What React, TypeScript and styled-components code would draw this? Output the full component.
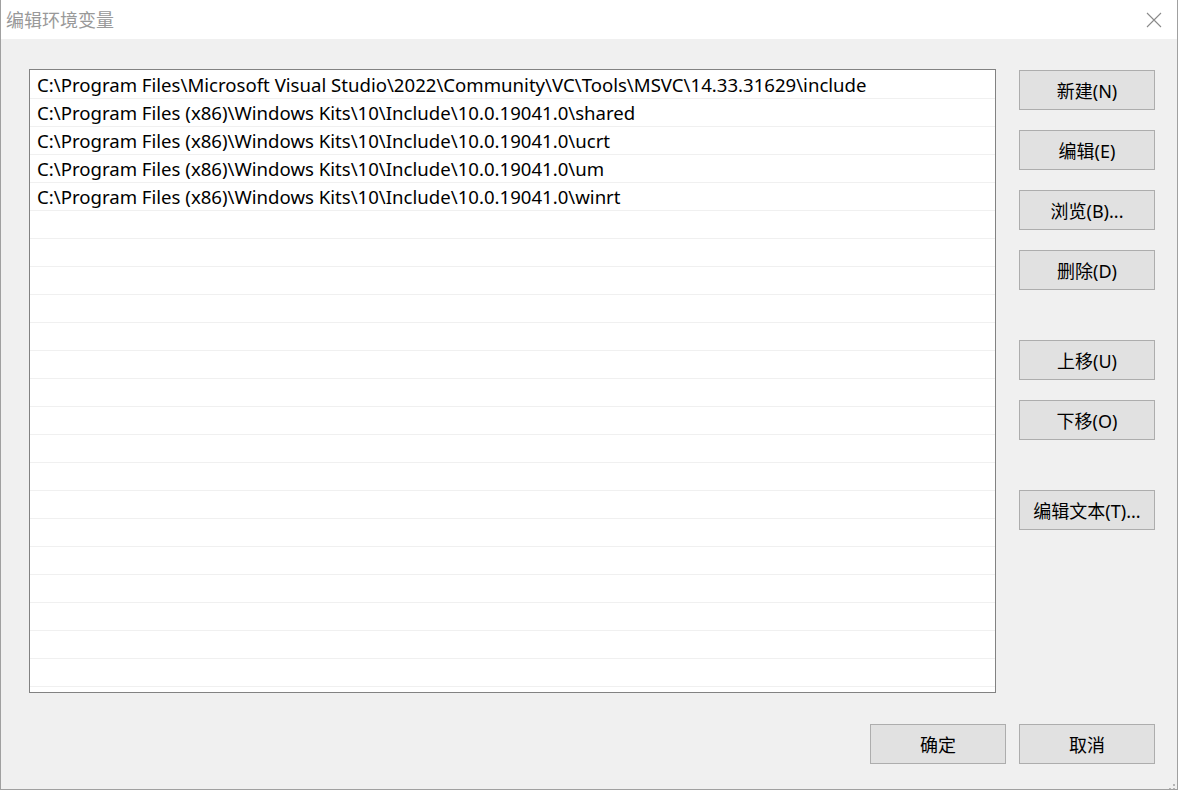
import styled, { createGlobalStyle } from "styled-components";

const GlobalStyle = createGlobalStyle`
  html, body {
    margin: 0;
    padding: 0;
    background: #ffffff;
  }
  body {
    font-family: "Noto Sans", "Noto Sans CJK SC", sans-serif;
  }
`;

const Window = styled.div`
  width: 1178px;
  height: 790px;
  box-sizing: border-box;
  border: 1px solid #a0a0a0;
  border-top: none;
  display: flex;
  flex-direction: column;
  background: #f0f0f0;
  overflow: hidden;
  position: relative;
`;

const TitleBar = styled.div`
  height: 39px;
  flex-shrink: 0;
  background: #ffffff;
  display: flex;
  align-items: center;
  justify-content: space-between;
  padding: 0 14px 0 5px;
`;

const Title = styled.span`
  font-family: "Noto Sans CJK SC", sans-serif;
  font-size: 18px;
  color: #999999;
  margin-top: -1px;
`;

const CloseButton = styled.div`
  width: 18px;
  height: 18px;
  display: flex;
  align-items: center;
  justify-content: center;
`;

const Body = styled.div`
  flex: 1;
  display: flex;
  flex-direction: column;
  padding: 30px 22px 26px 28px;
`;

const Main = styled.div`
  display: flex;
  gap: 23px;
`;

const List = styled.div`
  width: 967px;
  height: 624px;
  box-sizing: border-box;
  border: 1px solid #828282;
  padding-top: 1px;
  background: #ffffff;
  overflow: hidden;
  display: flex;
  flex-direction: column;
`;

const Row = styled.div`
  height: 28px;
  flex-shrink: 0;
  box-sizing: border-box;
  border-bottom: 1px solid #f0f0f0;
  padding-left: 7px;
  display: flex;
  align-items: center;
  font-size: 18.6px;
  color: #000000;
  white-space: nowrap;
`;

const SideButtons = styled.div`
  display: flex;
  flex-direction: column;
  gap: 20px;
  padding-top: 1px;
`;

const Button = styled.button<{ $spaced?: boolean }>`
  width: 136px;
  height: 40px;
  box-sizing: border-box;
  border: 1px solid #adadad;
  background: #e1e1e1;
  font-family: "Noto Sans", "Noto Sans CJK SC", sans-serif;
  font-size: 18px;
  color: #000000;
  padding: 0;
  margin-top: ${(p) => (p.$spaced ? "30px" : "0")};
  display: flex;
  align-items: center;
  justify-content: center;
`;

const Footer = styled.div`
  margin-top: 31px;
  display: flex;
  justify-content: flex-end;
  gap: 13px;
`;

const Grip = styled.div`
  position: absolute;
  right: 2px;
  bottom: 2px;
  width: 10px;
  height: 10px;
`;

const paths = [
  "C:\\Program Files\\Microsoft Visual Studio\\2022\\Community\\VC\\Tools\\MSVC\\14.33.31629\\include",
  "C:\\Program Files (x86)\\Windows Kits\\10\\Include\\10.0.19041.0\\shared",
  "C:\\Program Files (x86)\\Windows Kits\\10\\Include\\10.0.19041.0\\ucrt",
  "C:\\Program Files (x86)\\Windows Kits\\10\\Include\\10.0.19041.0\\um",
  "C:\\Program Files (x86)\\Windows Kits\\10\\Include\\10.0.19041.0\\winrt",
];

const rows = Array.from({ length: 23 }, (_, i) => paths[i] ?? "");

const App = () => {
  return (
    <Window>
      <GlobalStyle />
      <TitleBar>
        <Title>编辑环境变量</Title>
        <CloseButton>
          <svg width="16" height="16" viewBox="0 0 16 16">
            <path d="M1 1L15 15M15 1L1 15" stroke="#8a8a8a" strokeWidth="1.1" />
          </svg>
        </CloseButton>
      </TitleBar>
      <Body>
        <Main>
          <List>
            {rows.map((text, i) => (
              <Row key={i}>{text}</Row>
            ))}
          </List>
          <SideButtons>
            <Button>新建(N)</Button>
            <Button>编辑(E)</Button>
            <Button>浏览(B)...</Button>
            <Button>删除(D)</Button>
            <Button $spaced>上移(U)</Button>
            <Button>下移(O)</Button>
            <Button $spaced>编辑文本(T)...</Button>
          </SideButtons>
        </Main>
        <Footer>
          <Button>确定</Button>
          <Button>取消</Button>
        </Footer>
      </Body>
      <Grip>
        <svg width="10" height="10" viewBox="0 0 10 10">
          {[
            [8, 0],
            [4, 4],
            [8, 4],
            [0, 8],
            [4, 8],
            [8, 8],
          ].map(([x, y]) => (
            <rect key={`${x}-${y}`} x={x} y={y} width="2" height="2" fill="#b4b4b4" />
          ))}
        </svg>
      </Grip>
    </Window>
  );
};

export default App;
